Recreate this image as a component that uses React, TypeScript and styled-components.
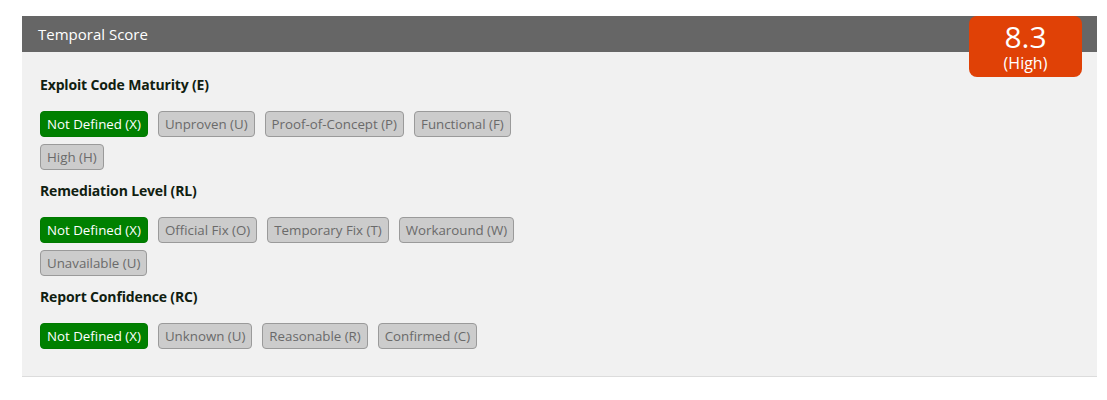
import styled, { createGlobalStyle } from 'styled-components';

const GlobalStyle = createGlobalStyle`
	body {
		margin: 0;
		background: #fff;
		font-family: "Open Sans", "Liberation Sans", sans-serif;
	}
`;

const Page = styled.div`
	padding: 16px 10px 0 22px;
`;

const Panel = styled.section`
	position: relative;
	background: #f1f1f1;
	border-bottom: 1px solid #dcdcdc;
	padding-bottom: 27px;
`;

const Header = styled.div`
	height: 36px;
	background: #666666;
	color: #fff;
	font-size: 15px;
	line-height: 36px;
	padding-left: 16px;
`;

const Badge = styled.div`
	position: absolute;
	top: 0;
	right: 15px;
	width: 113px;
	height: 61px;
	border-radius: 8px;
	background: #e04106;
	color: #fff;
	display: flex;
	flex-direction: column;
	align-items: center;
	padding-top: 5px;
	box-sizing: border-box;
`;

const Score = styled.div`
	font-size: 30px;
	line-height: 32px;
`;

const Severity = styled.div`
	font-size: 16px;
	line-height: 20px;
`;

const Body = styled.div`
	padding: 12px 18px 0 18px;
`;

const Metric = styled.div`
	margin-top: 11px;
`;

const Label = styled.div`
	font-size: 14px;
	font-weight: 700;
	line-height: 20px;
	letter-spacing: -0.15px;
	color: #102010;
	margin-bottom: 16px;
`;

const Options = styled.div`
	display: flex;
	flex-wrap: wrap;
	column-gap: 10px;
	row-gap: 7px;
	max-width: 490px;
`;

const Option = styled.button<{ $active?: boolean }>`
	height: 26px;
	box-sizing: border-box;
	padding: 0 6px;
	font-family: inherit;
	font-size: 13.3px;
	border-radius: 4px;
	border: 1px solid ${(p) => (p.$active ? '#007a00' : '#9a9a9a')};
	background: ${(p) => (p.$active ? '#008000' : '#cccccc')};
	color: ${(p) => (p.$active ? '#ffffff' : '#6a6a6a')};
	cursor: pointer;
`;

const metrics = [
	{
		label: 'Exploit Code Maturity (E)',
		options: ['Not Defined (X)', 'Unproven (U)', 'Proof-of-Concept (P)', 'Functional (F)', 'High (H)'],
	},
	{
		label: 'Remediation Level (RL)',
		options: ['Not Defined (X)', 'Official Fix (O)', 'Temporary Fix (T)', 'Workaround (W)', 'Unavailable (U)'],
	},
	{
		label: 'Report Confidence (RC)',
		options: ['Not Defined (X)', 'Unknown (U)', 'Reasonable (R)', 'Confirmed (C)'],
	},
];

export default function App() {
	return (
		<Page>
			<GlobalStyle />
			<Panel>
				<Header>Temporal Score</Header>
				<Badge>
					<Score>8.3</Score>
					<Severity>(High)</Severity>
				</Badge>
				<Body>
					{metrics.map((m) => (
						<Metric key={m.label}>
							<Label>{m.label}</Label>
							<Options>
								{m.options.map((o, i) => (
									<Option key={o} $active={i === 0}>{o}</Option>
								))}
							</Options>
						</Metric>
					))}
				</Body>
			</Panel>
		</Page>
	);
}
